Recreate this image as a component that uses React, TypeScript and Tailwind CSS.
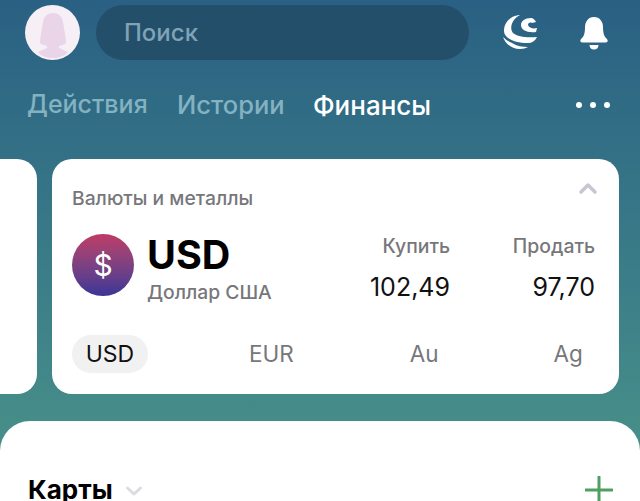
import React from "react";

function Globe() {
  return (
    <svg width="36" height="37" viewBox="0 0 36 37" fill="#fff">
      <path d="M17 1C8 2 2 9 2 17c0 7 10 12 24 12 4 0 7-2 9-6-10 1-19 0-24-4-4-5-1-14 7-18z" />
      <path d="M29 4c-6 0-10 3-10 7 0 5 6 8 15 7l1-4c-4 1-8 0-9-3 0-2 2-3 4-2l4-1c-1-2-3-4-5-4z" />
      <path d="M1 23c2 6 8 12 17 12 3 0 6-1 8-2-6 0-11-1-16-4-4-2-6-3-9-6z" />
    </svg>
  );
}

function Bell() {
  return (
    <svg width="28" height="34" viewBox="0 0 28 34" fill="#fff">
      <path d="M14 1c-6 0-9 5-9 10 0 6-1 9-3 11-1.500 1.500-2 2.500-1.500 3.500.4.800 1.500 1 2.500 1h22c1 0 2.100-.2 2.500-1 .5-1 0-2-1.500-3.500-2-2-3-5-3-11 0-5-3-10-9-10z" />
      <path d="M9.500 29h9c0 3-2 4.500-4.500 4.500S9.500 32 9.500 29z" />
    </svg>
  );
}

function Avatar() {
  return (
    <div className="w-[55px] h-[55px] rounded-full bg-[#f6eff6] overflow-hidden shrink-0">
      <svg width="55" height="55" viewBox="0 0 55 55">
        <path
          d="M28 8c-5 0-9 3-10 9-1 7-3 15-3 21 2 2 5 2 7 3v2l-9 4c3 4 9 6 15 6s12-2 15-6l-9-4v-2c2-1 5-1 7-3 0-6-2-14-3-21-1-6-5-9-10-9z"
          fill="#e9d5e7"
        />
      </svg>
    </div>
  );
}

export default function App() {
  return (
    <div
      className="w-[640px] h-[501px] overflow-hidden bg-gradient-to-b from-[#2a6083] to-[#4b958a] flex flex-col"
      style={{ fontFamily: "Inter, 'Liberation Sans', sans-serif" }}
    >
      <header className="h-[55px] mt-[5px] pl-[25px] flex items-center shrink-0">
        <Avatar />
        <div className="ml-[16px] w-[373px] h-[55px] rounded-full bg-[#234f6b] flex items-center pl-[28px] text-[24px] font-medium text-[#7ea4b6]">
          Поиск
        </div>
        <div className="ml-[33px] w-[36px] flex justify-center -mt-[1px]">
          <Globe />
        </div>
        <div className="ml-[42px] w-[28px] flex justify-center mt-[1px]">
          <Bell />
        </div>
      </header>

      <nav className="mt-[28px] h-[34px] pl-[27px] pr-[30px] flex items-center text-[25px] font-medium shrink-0">
        <span className="w-[150px] text-[#84b2c1]">Действия</span>
        <span className="w-[136px] text-[25.500px] text-[#84b2c1]">Истории</span>
        <span className="text-[26px] text-white">Финансы</span>
        <div className="ml-auto flex gap-[8px]">
          <i className="block w-[6px] h-[6px] rounded-full bg-white" />
          <i className="block w-[6px] h-[6px] rounded-full bg-white" />
          <i className="block w-[6px] h-[6px] rounded-full bg-white" />
        </div>
      </nav>

      <div className="mt-[37px] h-[235px] flex gap-[15px] shrink-0">
        <div className="w-[37px] bg-white rounded-r-[20px]" />
        <section className="w-[567px] bg-white rounded-[20px] pl-[20px] pr-[24px] pt-[27px] flex flex-col relative">
          <svg
            className="absolute right-[21px] top-[22px]"
            width="20"
            height="14"
            viewBox="0 0 20 14"
            fill="none"
            stroke="#c9c5d3"
            strokeWidth="3.500"
            strokeLinecap="round"
            strokeLinejoin="round"
          >
            <path d="M3 11l7-7 7 7" />
          </svg>
          <div className="text-[19.300px] leading-[24px] font-medium text-[#77777b]">Валюты и металлы</div>
          <div className="mt-[24px] flex items-start">
            <div className="w-[62px] h-[62px] rounded-full bg-gradient-to-b from-[#bf3b66] to-[#3c3396] flex items-center justify-center text-white shrink-0 text-[30px] font-normal leading-none">
              $
            </div>
            <div className="ml-[13px]">
              <div className="text-[39.500px] leading-[44px] font-bold text-black -mt-[1px]">USD</div>
              <div className="text-[19.300px] leading-[26px] font-medium text-[#77777b] mt-[2px]">Доллар США</div>
            </div>
            <div className="ml-auto w-[100px] text-right">
              <div className="text-[19.400px] leading-[24px] font-medium text-[#77777b]">Купить</div>
              <div className="mt-[13px] text-[25px] leading-[32px] text-[#111]">102,49</div>
            </div>
            <div className="ml-[45px] w-[100px] text-right">
              <div className="text-[19.400px] leading-[24px] font-medium text-[#77777b]">Продать</div>
              <div className="mt-[13px] text-[25px] leading-[32px] text-[#111]">97,70</div>
            </div>
          </div>
          <div className="mt-[30px] flex items-center text-[22.500px] text-[#77777b]">
            <span className="w-[76px] h-[38px] rounded-full bg-[#f1f1f2] text-[23px] text-[#111] flex items-center justify-center">
              USD
            </span>
            <span className="ml-[101px]">EUR</span>
            <span className="ml-[116px]">Au</span>
            <span className="ml-[115px]">Ag</span>
          </div>
        </section>
      </div>

      <section className="mt-[27px] flex-1 min-h-0 bg-white rounded-t-[30px] pt-[58px] pl-[28px] pr-[27px] flex items-center justify-between">
        <div className="flex items-center gap-[12px]">
          <span className="text-[26px] leading-[32px] font-bold text-black">Карты</span>
          <svg className="mt-[2px]" width="18" height="12" viewBox="0 0 18 12" fill="none" stroke="#dcdce0" strokeWidth="3" strokeLinecap="round" strokeLinejoin="round">
            <path d="M2.500 3l6.500 6 6.500-6" />
          </svg>
        </div>
        <svg width="28" height="28" viewBox="0 0 28 28" stroke="#4da05f" strokeWidth="3" strokeLinecap="round" className="shrink-0">
          <path d="M14 1v26M1 14h26" />
        </svg>
      </section>
    </div>
  );
}
